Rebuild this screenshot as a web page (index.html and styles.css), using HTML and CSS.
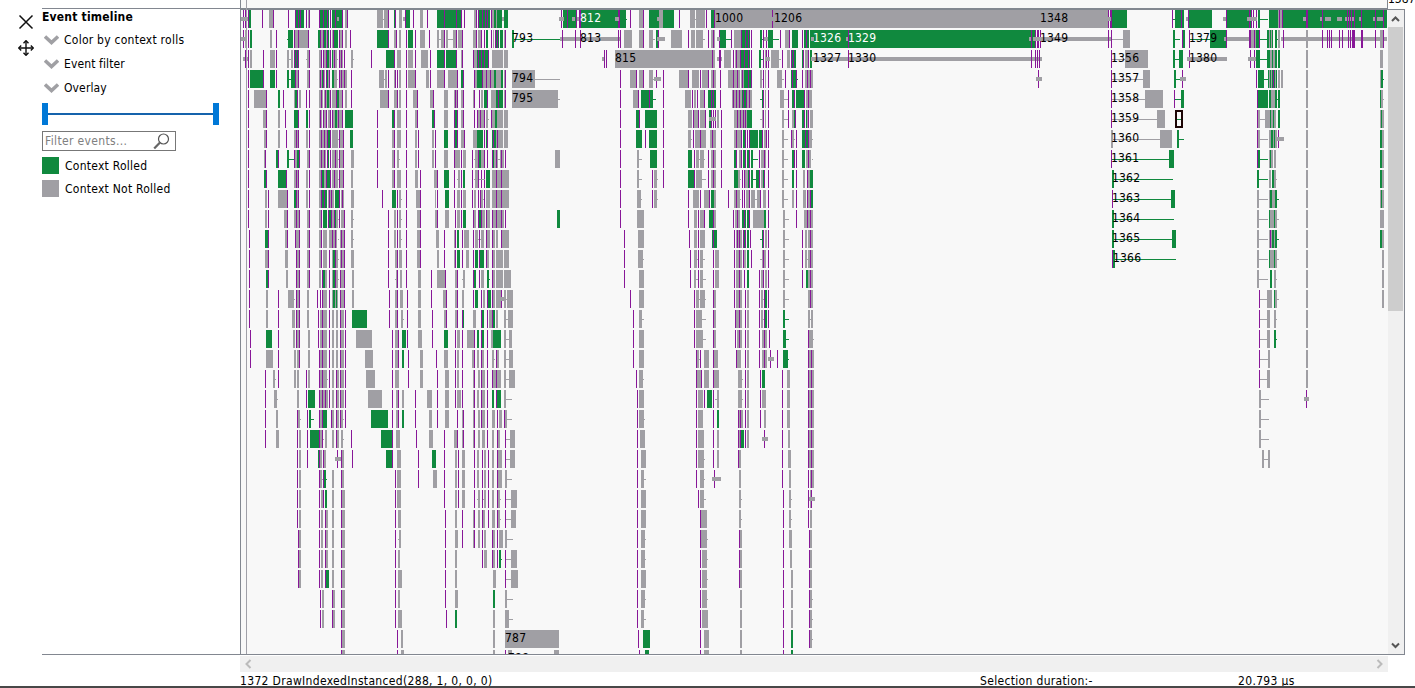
FILE: index.html
```html
<!DOCTYPE html>
<html lang="en">
<head>
<meta charset="utf-8">
<title>Event timeline</title>
<link rel="stylesheet" href="styles.css">
</head>
<body>
<div class="app">
  <div class="main">
    <div class="tools">
      <svg width="16" height="16" viewBox="0 0 16 16"><path d="M1.5 1.5L14.5 14.5M14.5 1.5L1.5 14.5" stroke="#111" stroke-width="1.5" fill="none"/></svg>
      <svg width="16" height="16" viewBox="0 0 16 16"><path d="M8 1V15M1 8H15" stroke="#111" stroke-width="1.4" fill="none"/><path d="M5.5 3.2L8 .7L10.5 3.2M5.5 12.8L8 15.3L10.5 12.8M3.2 5.5L.7 8L3.2 10.5M12.8 5.5L15.3 8L12.8 10.5" stroke="#111" stroke-width="1.4" fill="none"/></svg>
    </div>
    <div class="panel">
      <div class="title">Event timeline</div>
      <div class="option"><svg width="15" height="10" viewBox="0 0 15 10"><path d="M1 1.5L7.5 7.5L14 1.5" class="chev"/></svg><span class="wide">Color by context rolls</span></div>
      <div class="option"><svg width="15" height="10" viewBox="0 0 15 10"><path d="M1 1.5L7.5 7.5L14 1.5" class="chev"/></svg><span>Event filter</span></div>
      <div class="option"><svg width="15" height="10" viewBox="0 0 15 10"><path d="M1 1.5L7.5 7.5L14 1.5" class="chev"/></svg><span>Overlay</span></div>
      <div class="range"><i class="knob"></i><i class="track"></i><i class="knob"></i></div>
      <div class="filter"><span>Filter events...</span><svg width="17" height="17" viewBox="0 0 17 17"><circle cx="10.5" cy="6" r="5" fill="none" stroke="#555" stroke-width="1.2"/><path d="M7 9.5L1.2 15.5" stroke="#666" stroke-width="2.2"/></svg></div>
      <div class="legend"><i class="swatch rolled"></i><span class="wide">Context Rolled</span></div>
      <div class="legend"><i class="swatch kept"></i><span class="wide">Context Not Rolled</span></div>
    </div>
    <div class="view"><svg id="timeline" width="1147" height="654" viewBox="241 0 1147 654" shape-rendering="crispEdges"></svg></div>
    <div class="vside">
      <div class="ruler-end"><span>1387</span></div>
      <div class="vscroll">
        <svg width="15" height="18" viewBox="0 0 15 18"><path d="M4 11L7.5 7.5L11 11" fill="none" stroke="#555" stroke-width="2"/></svg>
        <div class="thumb"></div>
        <svg class="down" width="15" height="18" viewBox="0 0 15 18"><path d="M4 7.5L7.5 11L11 7.5" fill="none" stroke="#555" stroke-width="2"/></svg>
      </div>
    </div>
  </div>
  <div class="hscroll">
    <svg width="16" height="16" viewBox="0 0 16 16"><path d="M10.5 4L6.5 8L10.5 12" fill="none" stroke="#bbb" stroke-width="2"/></svg>
    <svg width="16" height="16" viewBox="0 0 16 16"><path d="M5.5 4L9.5 8L5.5 12" fill="none" stroke="#bbb" stroke-width="2"/></svg>
  </div>
  <div class="status"><span class="call">1372 DrawIndexedInstanced(288, 1, 0, 0, 0)</span><span class="duration">Selection duration:-</span><span class="time">20.793 µs</span></div>
  <div class="edge"></div>
</div>
<script src="timeline.js"></script>
</body>
</html>
```
FILE: styles.css
```css
body { margin: 0; background: #fff; overflow: hidden; }
.app { width: 1415px; height: 688px; overflow: hidden; display: flex; flex-direction: column; background: #fff; color: #000; font: 12px "DejaVu Sans Condensed", "DejaVu Sans", sans-serif; font-stretch: condensed; }
.main { display: flex; height: 655px; flex: none; }
.tools { width: 42px; flex: none; box-sizing: border-box; padding: 14px 0 0 18px; display: flex; flex-direction: column; gap: 10px; }
.tools svg { display: block; }
.panel { width: 198px; flex: none; box-sizing: border-box; margin-top: 8px; border-top: 1px solid #828790; border-bottom: 1px solid #828790; }
.title { height: 19px; line-height: 17px; font-weight: bold; letter-spacing: .2px; white-space: nowrap; }
.option { display: flex; align-items: center; gap: 5px; height: 24px; padding-left: 2px; letter-spacing: .12px; white-space: nowrap; }
.wide { letter-spacing: .25px; }
.chev { fill: none; stroke: #a0a0a4; stroke-width: 3.5; }
.range { display: flex; align-items: center; width: 177px; height: 22px; margin-top: 3px; }
.knob { width: 6px; height: 22px; background: #0078d7; }
.track { flex: 1; height: 2px; background: #1563ac; }
.filter { display: flex; justify-content: space-between; align-items: center; box-sizing: border-box; width: 134px; height: 20px; margin: 6px 0; padding: 0 5px 0 2px; border: 1px solid #777; color: #808080; white-space: nowrap; }
.filter span { letter-spacing: .35px; }
.legend { display: flex; align-items: center; gap: 6px; height: 17px; margin-bottom: 6px; white-space: nowrap; }
.swatch { width: 17px; height: 17px; }
.rolled { background: #10893e; }
.kept { background: #a09fa4; }
.view { width: 1147px; height: 654px; flex: none; border-left: 1px solid #828790; border-bottom: 1px solid #828790; background: #f8f8f8; }
.view svg { display: block; }
.view text { font: 12px "DejaVu Sans Condensed", "DejaVu Sans", sans-serif; font-stretch: condensed; }
.vside { width: 17px; flex: none; display: flex; flex-direction: column; }
.ruler-end { height: 9px; width: 27px; box-sizing: border-box; overflow: hidden; }
.ruler-end span { display: block; line-height: 14px; margin-top: -8px; }
.vscroll { box-sizing: border-box; width: 17px; height: 646px; border: 1px solid #828790; border-left: 0; padding-right: 1px; background: #f0f0f0; display: flex; flex-direction: column; }
.vscroll svg { display: block; flex: none; }
.thumb { height: 284px; width: 15px; background: #cdcdcd; margin-top: -1px; }
.down { margin-top: auto; }
.hscroll { width: 1148px; height: 16px; flex: none; margin: 1px 0 0 240px; background: #f0f0f0; display: flex; justify-content: space-between; }
.status { display: flex; height: 14px; flex: none; padding-left: 240px; line-height: 19px; letter-spacing: .33px; white-space: nowrap; }
.call { width: 740px; }
.duration { width: 258px; }
.edge { height: 2px; flex: none; background: #484848; }
```
FILE: timeline.js
```js
// Each row lists its marks as "x" or "x:width", grouped by kind:
// p = marker, g = not rolled, G = rolled, w/W = thin wire, b = thick bar.
const rows = [
"g 269:4 308:2 p 243 245 G 248:3 p 248 262 273 288 b 240:8 G 295:9 p 295 298 300 306 309 G 319:10 p 319 323 327 330 G 332:11 p 335 342 b 337:2 g 345:2 p 347 g 377:6 w 383:2 g 384:4 p 388 G 394 p 395 g 399:3 b 403:3 G 406:4 p 405 413 g 420:3 p 427 G 437:25 p 444 456 461 464 g 474:3 p 476 G 478:12 p 478 482 485 487 g 491:4 p 491 G 494:2 g 496 G 497:5 b 502:2 G 504:4 G 563:14 p 561 567 576 b 559:5 572:3 577:3 G 580:38 p 579 580 618 b 615:4 G 620:6 p 619 W 626 p 630 g 639:4 p 643 G 649:25 g 659:4 b 657:2 p 679 g 690:5 w 695 g 696:9 p 706 G 711:3 p 714 g 715:393 p 772 b 771:3 p 1108 1110 G 1112:15 p 1111 b 1107:4 p 1172 W 1173:3 G 1175:9 p 1181 b 1186:2 p 1188 G 1189:23 p 1226 G 1227:25 b 1223:3 p 1249 1251 1253 1256 b 1247:10 G 1258:2 W 1258:10 G 1269:9 g 1278:5 p 1279 1282 G 1283:104 b 1303:4 1320:2 1325:6 1337:5 1345:9 1359:3 1373:3 1377:6 p 1306 1307 1322 1347 1349 1351 1354 1361 1375 1383",
"p 243 g 245:2 p 248 b 240:7 G 250:2 g 270:2 p 276 W 287 G 288:5 p 294 g 295:3 p 298 g 299:9 p 308 G 318:2 g 321:2 p 320 323 G 324:2 g 326 p 327 G 328 g 330 p 330 g 332 G 334:4 p 333 G 337 p 339 g 340:3 p 342 g 345:2 p 350 G 377:11 p 388 g 394:2 p 396 g 399:2 p 406 G 408:5 p 415 g 420:5 p 429 g 437:2 w 439:3 g 441:3 p 444 g 446:2 w 448:5 g 453:3 p 456 g 458:4 p 462 g 473:3 p 476 g 478:4 p 481 484 G 486:2 p 491 g 493 G 495:4 p 495 497 G 500:3 g 504 p 505 G 512:2 W 514:46 b 560:60 p 562 575 580 618 620 g 624:8 639:4 p 643 g 649:4 w 653:2 G 656:3 p 658 b 657:8 g 671:11 p 688 g 691:4 696:7 w 703:2 p 708 g 711:4 p 713 G 720:6 p 719 b 717:3 W 726:5 p 731 g 734:7 G 741:9 p 741 745 748 751 G 760:2 W 762 p 763 766 G 768:5 b 764:4 W 773:6 p 780 g 785:4 p 789 G 792:6 p 802 G 804:5 p 806 G 810:226 p 848 b 811:3 846:2 1029:3 p 1031 1035 1037 1038 1040 b 1033:8 1041:70 p 1108 1111 w 1112:11 g 1123:7 G 1173:2 W 1175:5 G 1182:3 p 1182 1189 W 1190:20 G 1210:16 b 1224:26 p 1226 1249 g 1251:5 p 1250 1254 G 1256:4 p 1259 W 1260:7 G 1267:6 g 1269 1271 G 1275:2 W 1277 g 1278:2 b 1281:106 p 1283 g 1306:2 p 1322 1327 1329 1331 1339 1342 1348 1350 1352:3 1361:2 1375 g 1380:3 p 1383",
"b 243:5 p 245 248 g 250:2 p 263 g 270:5 p 276 g 287:2 w 289:2 g 291:2 G 294:5 p 294 296 298 w 306 g 307:2 p 309 g 319:2 p 321 g 323:4 p 323 326 G 327:2 g 329 p 330 g 332:5 G 332 p 334 w 337 p 339 g 340:3 p 341 344 g 351:2 w 353 p 371 G 386:8 p 394 g 397:4 p 406 g 408:5 p 415 g 421:7 p 430 G 437:7 p 444 G 446:10 p 456 g 461 p 462 473 g 474:3 G 477:11 p 478 481 484 488 g 492:11 504:4 b 602:3 p 604 606 g 615:100 p 712 b 717:5 p 719 720 g 724:7 p 733 g 735:5 p 736 G 741:9 p 740 744 748 751 G 759:2 W 761:2 p 763 g 765 p 766 768 b 766:4 g 771:8 w 779:2 p 782 g 787:3 p 791 G 792:4 p 793 G 802:2 p 803 g 805:3 p 808 G 810:2 b 811:231 p 848 1031 1035 1037 1039 1111 w 1112:13 g 1125:23 G 1173:2 W 1175:4 G 1179:4 p 1189 b 1187:40 p 1250 1254 b 1248:8 G 1256:4 W 1260:7 G 1267:3 g 1270:5 G 1272 1275:2 1278:2 g 1306:2 1380:3",
"p 248 G 250:14 p 263 G 270:5 p 276 G 287:2 W 289:2 G 291:8 p 295 298 g 296:2 307:2 p 309 g 319:6 p 320 323 326 G 322 327 g 328 p 329 g 332:5 G 332:2 w 337 p 339 g 340:4 p 341 344 g 345:2 p 351 g 379:5 w 384 g 385:2 p 388 g 394 p 395 397 g 399:2 p 406 g 408:7 p 415 g 426:3 p 430 g 437:7 p 444 g 448:9 p 457 G 461:2 p 463 474 g 475:2 G 477:5 p 482 g 483:3 p 486 g 487:3 p 490 g 491:12 G 494:2 501:2 g 504 p 505 g 512:23 w 535:25 p 620 g 630:6 p 636 g 639:4 p 643 g 649:4 w 653 p 656 b 654:7 p 663 g 679:9 p 688 g 692:7 p 700 g 702:6 p 708 g 711:5 p 713 720 g 728:12 p 733 737 g 741:3 p 742 G 744:7 p 748 751 g 760:2 w 762 p 763 g 765 p 768 g 777:5 w 782:2 p 785 G 791:6 p 792 796 W 797 p 802 g 805:8 p 807 810 1038 b 1036:6 p 1111 w 1112:31 g 1143:7 G 1174:2 W 1176:4 p 1182 b 1180:6 p 1256 G 1258:6 W 1264:4 G 1268:9 g 1269 1271 1275 p 1273 g 1278:2 1281:2 1306:2 1380 G 1381:2 W 1383",
"p 248 g 254:12 p 266 G 278:2 p 283 g 294 G 295:2 p 297 g 299:2 p 306 309 g 319:4 p 321 g 324:4 p 325 G 327:2 g 329 p 330 g 332:11 p 336 G 337:2 p 342 g 345:2 p 351 g 380:8 p 388 g 394:3 p 397 g 399:2 p 406 g 413:4 p 417 g 430:3 p 433 g 444:4 454:4 p 455 457 g 461:2 p 463 g 473 p 474 479 g 481:2 G 484:4 p 487 g 491:5 G 496:7 p 498 g 504 p 505 g 512:46 w 558:2 p 620 g 633:5 p 638 G 641:12 p 649 W 653:3 p 663 g 685:6 p 692 g 694:2 p 697 g 700:4 p 704 G 708:8 p 711 713 720 g 732:20 G 742:4 p 733 736 739 743 746 749 W 760:2 G 762 p 763 g 765 p 768 g 780:4 w 784:4 p 788 G 792:3 p 794 G 796:9 p 804 g 806:6 p 808 1111 w 1112:33 g 1145:18 p 1174 W 1175:6 G 1181:3 p 1257 G 1258:10 1269:2 g 1271:4 G 1275:2 W 1277 G 1278:2 g 1306:2 G 1380 g 1381:2 w 1383",
"p 248 g 263:3 p 266 g 278:2 p 285 G 294:4 p 298 G 306:2 p 309 g 319:3 p 320 g 323:3 p 323 326 g 328:2 p 330 g 332:10 p 332 G 335:2 p 338 342 G 345:8 p 377 G 392:2 p 394 g 397:4 p 406 g 415:2 p 417 G 432:2 p 434 g 444:4 p 454 G 455:2 p 457 g 461:2 p 463 474 477 g 478:7 p 480 484 g 486:2 w 488 p 491 g 492:11 G 495:2 g 504:4 p 620 G 636:3 p 639 G 645:12 p 663 g 688:4 p 693 g 694:5 p 698 g 700:6 p 705 G 709:2 p 711 713 715 b 709:7 g 717:2 p 721 g 734:13 p 737 740 743 G 747:5 p 745 w 760:2 g 762 p 763 g 765 p 768 g 782:2 w 784:4 p 788 g 792:2 G 794 p 795 G 802:2 p 804 g 806:3 G 806 p 808 g 810:3 p 1111 w 1112:45 g 1157:8 W 1177:4 p 1257 g 1258:2 w 1260:5 g 1265:11 G 1270 1273 G 1278:2 g 1306:2 1380 G 1381 g 1382:2",
"p 248 g 264:2 p 266 g 278:2 p 286 g 294:5 p 296 298 g 306:2 p 309 g 319:8 p 321 324 327 G 328:2 g 330 p 330 g 332:6 w 338 p 339 g 340:3 p 343 G 350:3 p 377 g 392:2 p 394 g 397:4 p 406 g 415:2 p 418 g 432:2 p 435 G 444:4 p 454 G 455:2 p 457 g 461:3 p 464 g 473:4 G 477:6 p 484 G 486:2 p 487 G 492:4 p 493 g 496:7 p 497 g 504:4 p 620 G 636:6 p 645 G 649:8 p 663 g 688:3 w 691 p 693 g 695:11 p 700 g 710:6 p 712 721 g 734:7 p 736 741 G 743:2 p 745 747 G 750:8 p 749 G 759:3 p 762 g 764:2 p 766 768 g 782:2 w 784:4 p 791 g 792:2 w 794 p 796 G 802:3 p 805 G 806:2 g 808:4 p 808 w 812 g 1111:2 w 1113:47 g 1160:12 G 1177:2 W 1179:5 p 1257 g 1258:2 w 1260:8 g 1269:8 G 1271:2 1274 p 1278 b 1276:8 g 1306:2 G 1380:2 g 1382:2",
"p 248 g 264 p 265 G 276:2 p 278 G 287:2 W 289:5 p 294 g 295:2 G 297:2 p 299 g 307:2 p 309 g 319:4 p 321 g 323:3 p 324 G 327:2 p 327 330 g 332:6 p 335 w 338 p 339 g 340:3 p 343 g 351:3 p 377 g 392:2 p 394 g 397:2 w 399 p 406 g 415:2 p 418 g 432:2 p 435 g 444:4 454:6 p 454 461 g 463:3 p 472 w 474 g 475:4 p 478 G 479:2 g 481:4 p 484 487 492 G 493 g 494:4 500:4 p 496 501 505 w 497:3 g 555:5 p 620 g 637:2 w 639:3 G 650:7 p 663 G 688:4 p 694 g 696:3 w 699 g 700:4 w 704 p 708 g 711:5 p 713 721 G 734:3 p 736 g 739:2 p 741 G 743:2 p 745 G 747:2 p 749 G 751:2 W 753:5 p 759 g 761:5 p 764 768 g 782:2 w 784:4 G 792:2 p 794 796 G 802:3 g 806:5 p 808 w 812 p 1111 W 1112:57 G 1169:5 p 1257 G 1258:2 W 1260:8 g 1269:4 G 1270 g 1274:2 1306:2 G 1380:2 g 1382:2",
"p 248 G 264:2 p 266 G 278:8 p 286 g 294:5 p 296 298 g 306:2 p 309 g 319:2 G 321:3 p 321 g 324:3 p 326 G 327:4 p 330 g 332:6 p 334 w 338 p 339 g 340:3 p 343 g 351:2 p 377 g 392:2 p 394 g 397:4 p 406 g 415:3 p 420 g 434:3 p 437 G 444:5 p 454 w 457 g 458:2 p 461 G 463:2 p 472 w 474 g 475:4 p 478 481 484 w 479:6 G 486:4 g 492:17 p 496 501 p 620 g 637:2 w 639:3 p 652 g 654:3 w 657 p 663 G 688:6 p 694 g 696:6 w 702:4 p 708 g 711:5 p 713 721 G 734:4 g 738:2 w 740 p 742 744 g 745:3 G 748:2 p 749 G 751:2 W 753:3 G 756:3 p 759 g 761:3 G 763:2 p 764 768 g 782:2 w 784:4 G 792:2 p 796 g 803:2 p 807 g 808:3 G 810:3 1112:2 W 1114:59 G 1257:2 W 1259:9 g 1269:2 G 1272:2 g 1274:2 w 1276 g 1306:2 G 1380:2 g 1382:2",
"p 248 g 265:2 p 268 g 278:9 p 287 G 294:2 p 296 g 297 p 298 g 306:2 p 309 g 319:2 G 322:5 p 321 324 g 328 p 329 g 330:4 p 331 G 335:4 p 339 g 341:3 p 342 g 351:3 p 382 G 392:4 p 397 g 399:2 w 401 p 406 g 416:4 p 420 g 435 p 437 G 445:4 p 454 g 457:3 p 461 g 463:3 p 472 g 474:2 p 478 480 g 481:2 w 483 p 484 g 486:4 492:17 p 496 501 620 g 637:4 w 641 p 652 g 654:3 w 657 p 688 g 693:6 p 700 g 704:5 p 709 G 711:3 g 714:2 p 728 g 734:6 p 736 w 740 p 742 744 g 746:3 p 749 g 751:4 w 755:2 g 757:3 p 760 g 763:3 p 768 g 782:2 w 784:4 g 792:2 p 796 g 803:3 p 807 g 808:2 p 810 G 811:2 p 1112 W 1113:58 G 1171:4 g 1257:2 w 1259:9 g 1269 G 1270:2 g 1272:3 G 1275:2 W 1277:2 g 1306:2 1380 G 1381 g 1382:2",
"p 248 g 265:2 p 268 g 284:3 p 287 g 294:5 p 296 299 g 307:2 p 309 g 319:3 p 321 G 323:4 p 328 G 329:2 p 331 g 332:6 G 335 p 334 w 338 p 339 g 341:3 p 344 g 351:2 w 353 p 388 g 394:2 p 397 g 399:2 w 401 p 406 g 417:3 p 420 g 435:2 p 437 g 445:4 p 455 g 457:3 p 461 G 463:3 p 473 g 474:2 p 478 G 479:2 p 481 g 482:3 p 486 g 487:3 p 492 g 493:11 p 496 501 505 G 557:3 p 620 g 637:7 p 688 g 694:3 p 698 g 700:4 p 704 G 709:5 p 713 g 714:2 p 733 g 735:5 p 737 G 742:4 p 744 G 747:2 p 749 g 753:11 G 764:2 p 768 g 783:2 w 785:4 p 796 g 804:9 p 807 810 G 1112:2 W 1114:60 g 1257:2 w 1259:9 G 1269 g 1270:7 G 1274 w 1277:2 g 1306:2 1380:4",
"p 249 G 265:3 p 268 g 285:2 p 287 295 g 296:3 p 299 g 307:2 p 309 g 319:2 p 321 g 323:4 329:8 p 332 335 w 338 g 340:5 p 341 344 g 351:2 w 353 p 388 g 394:2 p 397 g 399:2 w 401 p 406 g 417:3 p 420 g 436:3 p 444 g 454 p 455 G 457:2 p 462 g 464:5 p 473 g 475:3 w 478:3 p 479 g 481:3 p 486 g 487:3 p 492 g 493:2 496:2 p 501 g 502:7 p 624 g 638:6 p 689 g 694:3 p 698 g 700:5 G 712:5 p 713 734 g 736:6 p 737 739 G 744 p 743 745 G 747:2 p 750 W 760:2 G 762 p 763 g 765:2 p 768 g 783:2 w 785:4 p 802 g 805:2 808:5 p 810 G 1112:2 W 1114:58 G 1172:4 g 1257:2 w 1259:9 g 1269:7 p 1270 G 1272:2 1275:2 W 1277:2 g 1306:2 G 1380:2 g 1382:2",
"p 249 g 265:3 p 268 g 285:3 296:4 p 296 299 g 307:2 p 309 g 319:2 p 321 g 323:4 p 329 g 332:6 G 333:2 p 335 w 338 g 340:5 p 341 344 g 351:3 p 388 g 395:2 p 397 g 399:3 p 406 g 417:3 p 420 g 437:2 p 444 g 454 p 455 G 457:3 p 462 g 466:3 p 473 G 475:3 p 479 G 480:4 p 486 g 487:2 p 492 g 493:2 496:7 504:5 p 624 g 638:5 w 643 p 690 g 694:3 w 697 p 698 g 700:3 w 703:2 p 713 g 715:4 p 734 g 736:6 p 739 743 g 744:2 G 747:2 p 751 w 760:2 g 762:4 p 763 768 g 783:2 w 785:4 p 802 g 805:2 w 807 g 808:5 p 810 1112 G 1113:2 W 1115:61 g 1257:2 w 1259:9 G 1269 g 1270:7 G 1274 w 1277:2 g 1306:2 1382:2",
"p 249 G 266:2 p 268 g 286:2 296:4 p 296 299 g 307:2 p 309 g 319:2 p 322 G 323:2 g 325:2 p 329 g 332:6 G 333:2 p 335 w 338 g 340:5 p 340 344 g 352:2 p 388 w 395 g 396 p 397 g 400:2 p 406 g 418:3 p 431 g 437:8 p 445 g 455:2 p 457 w 462 g 463:2 p 473 G 474:2 p 479 g 481:3 G 487:2 W 489 p 492 g 493:2 496:7 504:7 p 624 g 639:5 p 690 g 694:2 w 696:2 p 698 g 700:3 w 703:3 p 713 g 715:4 p 734 g 736:6 p 739 744 G 747:2 p 759 g 761:2 p 763 g 765:2 p 768 g 783:2 w 785:4 p 802 G 806:2 g 808:5 p 810 g 1257:2 w 1259:9 G 1270:2 g 1274:2 w 1276 g 1306:2 1382:2",
"p 249 g 266:2 p 278 g 288:6 w 294 g 296:4 p 296 299 g 307:2 p 317 320 g 322:5 p 322 329 g 332:6 G 333:2 336 g 340:5 p 340 344 g 352:2 p 389 g 395:3 p 397 g 400:3 p 407 g 418:3 p 431 g 443:3 p 446 g 455:2 p 457 g 462:2 p 473 G 475:3 p 481 g 483:2 p 487 G 488:3 p 492 g 493:2 496:5 p 501 b 501:5 g 504:2 w 506 g 507:6 p 630 g 639:5 p 694 g 696:3 w 699 g 700:5 w 705 p 713 g 714:2 p 734 g 736:6 p 739 745 g 747:2 p 759 g 761:2 w 763 p 764 G 765:2 p 768 g 783:2 w 785:4 g 808:5 p 810 1259 w 1260:7 g 1267:5 G 1274 g 1275:2 w 1277:2 g 1306:2 1382:2",
"p 249 g 266:2 p 278 g 292:3 296:4 p 296 299 g 307:2 p 318 g 320:7 p 322 329 g 332:2 336:2 p 340 g 341:3 p 345 G 352:15 p 389 g 395:3 p 397 g 401:2 w 403 p 407 g 418:3 p 432 g 444:2 p 446 g 455:2 p 457 462 G 463 g 473:3 p 481 G 482:2 p 487 g 489:3 p 492 G 493:2 g 496:2 504:2 w 506:2 g 508:5 p 633 g 639:3 w 642:2 p 694 g 696:6 w 702:4 p 713 g 714:2 p 735 g 736:6 p 739 745 g 747:2 p 759 g 761:2 w 763 p 764 G 765:2 p 768 G 783:2 W 785:4 g 808:2 w 810 g 811:2 p 1259 w 1260:7 g 1267:3 1274:2 w 1276 g 1306:2",
"p 250 G 266:6 p 278 g 293:2 296:4 p 296 299 g 308:2 p 318 g 320:7 p 322 329 g 332:2 336:2 p 340 g 341:3 p 345 g 356:16 p 392 g 395:3 p 398 G 402:4 p 407 g 418:4 p 432 G 444:4 p 455 g 457:3 p 462 g 467:7 p 474 G 477:2 p 481 G 482:2 p 487 g 491:2 G 493:8 g 504:2 w 506:3 g 509:3 p 633 g 639:5 p 694 g 696:7 w 703:3 p 713 g 714:2 p 735 g 737:5 p 739 745 g 747:2 p 759 g 762:5 p 764 769 G 783:3 W 786:3 p 808 g 809:4 w 813 p 1259 w 1260:7 g 1267:3 G 1274:2 W 1276 g 1306:2",
"p 250 g 266:7 p 278 g 294:2 297:3 p 299 g 308:2 p 319 g 320:7 p 322 329 g 332:2 336:2 p 340 g 341:3 p 345 g 365:8 p 392 g 395:3 p 398 G 402:2 p 408 g 420:3 p 436 g 444:4 p 455 g 457:2 p 462 g 472:2 p 474 g 477:2 p 481 g 482:2 p 487 g 492:2 w 494 p 496 g 497:2 504:2 w 506:3 g 509:4 p 633 g 639:5 p 696 g 697:2 w 699 p 700 g 704:5 p 713 g 714:4 p 736 g 737:4 p 745 g 747:2 p 759 g 762:5 p 764 770 b 768:6 p 777 G 783:5 W 788 p 808 g 809:5 p 811 1259 w 1260:8 g 1268:2 1306:2",
"p 265 g 273:2 w 275 p 278 g 294:2 297:2 p 306 g 308:2 p 319 g 320:7 p 322 w 327 p 329 g 332:2 337:2 p 336 340 g 341:3 p 345 g 366:9 p 392 g 395:4 p 408 g 420:3 p 437 g 445:4 p 455 g 457:2 p 462 g 473 p 474 g 478:2 p 481 g 482:3 p 487 492 g 493:8 p 496 g 504:2 w 506:3 g 509:6 p 636 g 639:4 w 643 p 696 g 697:4 p 701 g 704:5 p 713 g 714:5 738:4 w 742 p 745 g 747:2 p 760 G 762:3 p 782 g 787:3 p 808 g 809:5 p 811 1259 w 1260:7 g 1267:3 1306:2",
"p 265 g 274:3 w 277 g 297:2 p 306 G 308:7 p 319 g 320:8 p 322 325 329 g 332:2 p 336 g 337:2 p 340 g 341:3 p 345 g 368:14 p 392 g 396:2 p 398 g 402:2 p 415 g 427:5 p 437 g 445:4 p 455 g 457:4 p 462 g 473 p 474 g 477:2 p 481 g 482:3 p 487 G 492:2 p 496 G 497:4 g 504:2 w 506:6 p 637 g 639:5 p 696 g 698:5 p 704 G 707:5 p 713 w 715:2 g 717:2 738:4 w 742 p 745 g 747:2 p 760 g 762:4 p 782 g 787:3 p 808 g 809:5 p 811 g 1259:2 w 1261:8 p 1306 b 1304:5",
"p 265 g 276:2 p 297 g 298:2 w 300 p 307 G 309:2 W 311:3 p 319 g 320:3 p 322 G 323:4 p 331 g 332:2 p 336 g 337:2 p 340 g 341:2 w 343 p 345 G 371:17 p 392 g 396:2 p 398 G 402:2 p 415 g 429:3 p 437 g 445:4 p 457 g 462 p 463 g 473 p 474 g 478:2 p 481 g 482:3 p 487 g 492:3 p 497 g 499:3 p 504 g 505:2 w 507:5 p 637 g 639:5 w 644 p 696 g 698:5 p 713 G 717:2 p 738 g 739:4 p 740 745 g 747:2 p 760 g 764:2 p 782 g 787:3 p 808 g 809:5 p 811 g 1259:2 w 1261:8",
"p 265 g 276:3 p 297 g 299:2 p 307 G 310:9 p 319 g 320:2 p 322 w 323 g 325:2 332:2 p 336 g 337:2 341:2 w 343 p 351 G 381:11 p 392 g 396:4 p 416 g 429:4 p 444 g 454:3 p 457 g 462 p 463 g 473 p 474 g 478:2 482:3 p 487 g 492:2 p 497 g 498:2 p 505 w 506:4 g 510:5 p 637 g 640:5 p 696 g 698:6 p 713 g 717:2 p 738 g 739 p 740 G 741:3 p 745 g 747:2 p 764 b 762:6 p 782 g 788:2 p 808 g 809:5 p 811 g 1259:2 w 1261:8",
"p 297 g 299:2 p 307 G 318 p 319 g 320:2 p 323 g 324:2 p 337 b 335:6 p 341 g 342:2 p 352 G 386:6 p 392 g 397:4 p 418 G 432:4 p 444 g 455:2 p 458 g 462:3 p 474 g 477:2 p 482 g 484:2 p 488 g 492:2 p 497 g 498:4 p 505 w 506:4 g 510:5 p 637 g 641:5 p 696 g 698:6 w 704 p 713 g 717:2 p 738 g 739:2 p 782 g 788:3 p 808 g 809:5 p 811 g 1262:2 w 1264:4 g 1268:2",
"p 297 g 299:2 p 319 g 320:2 w 322 p 323 G 324:2 W 326 g 332:2 p 341 g 342:2 p 395 g 397:4 p 418 g 433:4 p 444 g 455:2 p 458 g 462:3 p 474 g 477:2 p 482 g 484:2 p 488 g 492:2 p 497 g 498:4 505:2 w 507:5 p 637 g 641:3 w 644:2 p 696 g 700:4 w 704 p 714 b 712:9 g 739:2 p 782 g 789:2 p 808 g 810:4 p 811",
"p 297 g 299:2 p 319 g 321:2 p 323 G 325:2 g 332:2 p 341 g 342:3 p 395 g 397:4 p 444 g 455:2 p 458 g 462:3 p 474 w 477 g 478:2 p 482 w 483 g 484:2 p 488 g 492:2 p 497 g 498:2 w 500 p 505 w 506:5 g 511:6 p 637 g 641:5 p 698 g 700:4 w 704:2 g 739:2 w 741 p 783 g 789:2 w 791 p 808 g 810 p 811 b 809:6",
"p 297 g 299:2 p 319 g 321:2 p 325 g 326:2 332:2 p 341 g 342:3 p 395 g 398:3 p 445 g 455:2 p 462 g 473 p 474 g 478:2 p 482 g 483:2 p 488 g 492:3 p 497 g 498:2 w 500 p 505 w 506:5 g 511:5 p 637 g 641:5 p 700 g 701:6 739:2 w 741 p 783 g 789:2 w 791 p 808 g 810:2",
"p 298 g 299:2 p 319 g 321:2 p 325 g 326:2 332:2 p 341 g 342:3 p 395 w 398 g 399:2 p 445 g 455:3 p 462 g 473 p 474 g 478:2 p 482 g 484:2 p 492 g 493:2 p 497 g 499:4 505:2 w 507:6 p 637 g 641:4 w 645 p 700 g 701:6 w 707 p 739 g 740:2 p 783 g 789:3 p 809 g 810:2",
"p 298 g 299:2 p 319 g 321:2 p 325 g 326:2 332:2 p 341 g 342:3 p 395 g 398:2 p 445 g 455:2 p 482 g 484:3 p 492 g 493:2 p 497 G 499:2 W 501 p 505 w 506:5 g 511:6 p 637 g 641:4 w 645 p 700 g 702:5 w 707 p 739 g 740:2 p 783 g 790:2 p 809 g 810:2",
"p 298 g 299:2 p 319 g 321:2 p 325 G 326:3 g 332:2 p 341 g 342:3 p 395 g 398:4 p 445 g 455:2 493:3 p 505 w 506:5 g 511:7 p 637 g 641:5 p 700 g 702:5 w 707 p 739 g 740:2 p 783 g 791:2 p 809 g 810:2",
"p 320 g 322:2 p 332 g 333:2 p 341 g 342:3 p 395 g 398:2 p 445 g 455:3 G 493:2 g 505:2 w 507:6 p 637 g 641:4 w 645 p 700 g 702:5 w 707 g 740:2 p 783 g 791:2 p 809 g 810:2 w 812",
"p 320 g 322:2 p 332 g 333:2 p 341 g 342:3 p 395 g 398:4 p 446 G 455:2 g 493:2 505:4 w 509:4 p 637 g 641:3 w 644:2 p 700 g 702:6 740:2 p 783 g 791:2 p 809 g 810:2 w 812",
"p 341 g 342:3 p 397 g 401:2 493:2 505:54 p 638 G 643:7 p 700 g 704:5 740:2 p 783 G 791:2 p 809 g 810:2 w 812",
"p 341 g 342:3 p 397 g 401:3 493:2 p 505 g 508:4 554:5 p 639 G 645:4 p 700 g 704:5 740:2 p 783 G 791:2"
];

const labels = [[0,"812",580,1],[0,"1000",715],[0,"1206",774],[0,"1348",1040],
[1,"793",512],[1,"813",580],[1,"1326",813,1],[1,"1329",848,1],[1,"1349",1040],[1,"1379",1189],
[2,"815",615],[2,"1327",813],[2,"1330",848],[2,"1356",1111],[2,"1380",1189],
[3,"794",512],[3,"1357",1111],[4,"795",512],[4,"1358",1111],[5,"1359",1111],[6,"1360",1111],
[7,"1361",1111],[8,"1362",1112],[9,"1363",1112],[10,"1364",1112],[11,"1365",1112],[12,"1366",1113],
[31,"787",505],[32,"788",508]];

const svg = document.getElementById("timeline");
const colors = { p: "#881798", g: "#a09fa4", G: "#10893e", w: "#a09fa4", W: "#10893e", b: "#a09fa4" };
function add(name, attrs, text) {
  const el = document.createElementNS("http://www.w3.org/2000/svg", name);
  for (const key in attrs) el.setAttribute(key, attrs[key]);
  if (text) el.textContent = text;
  svg.appendChild(el);
}
function box(x, y, width, height, fill) { add("rect", { x, y, width, height, fill }); }

box(241, 8, 1147, 2, "#828790");
box(246, 0, 1, 654, "#a0a0a8");
rows.forEach((row, r) => {
  let kind = "g";
  const y = 10 + r * 20;
  for (const token of row.split(" ")) {
    if (colors[token]) { kind = token; continue; }
    const [x, w = 1] = token.split(":").map(Number);
    if (kind === "b") box(x, y + 7, w, 4, colors.b);
    else if (kind === "w" || kind === "W") box(x, y + 9, w, 1, colors[kind]);
    else box(x, y, w, 18, colors[kind]);
  }
});
add("rect", { x: 1176, y: 111, width: 6, height: 16, fill: "none", stroke: "#1c0505", "stroke-width": 2 });
box(1387, 0, 1, 9, "#828790");
for (const [r, text, x, light] of labels)
  add("text", { x, y: 22 + r * 20, fill: light ? "#fff" : "#000", textLength: text.length * 7, lengthAdjust: "spacing" }, text);
```
